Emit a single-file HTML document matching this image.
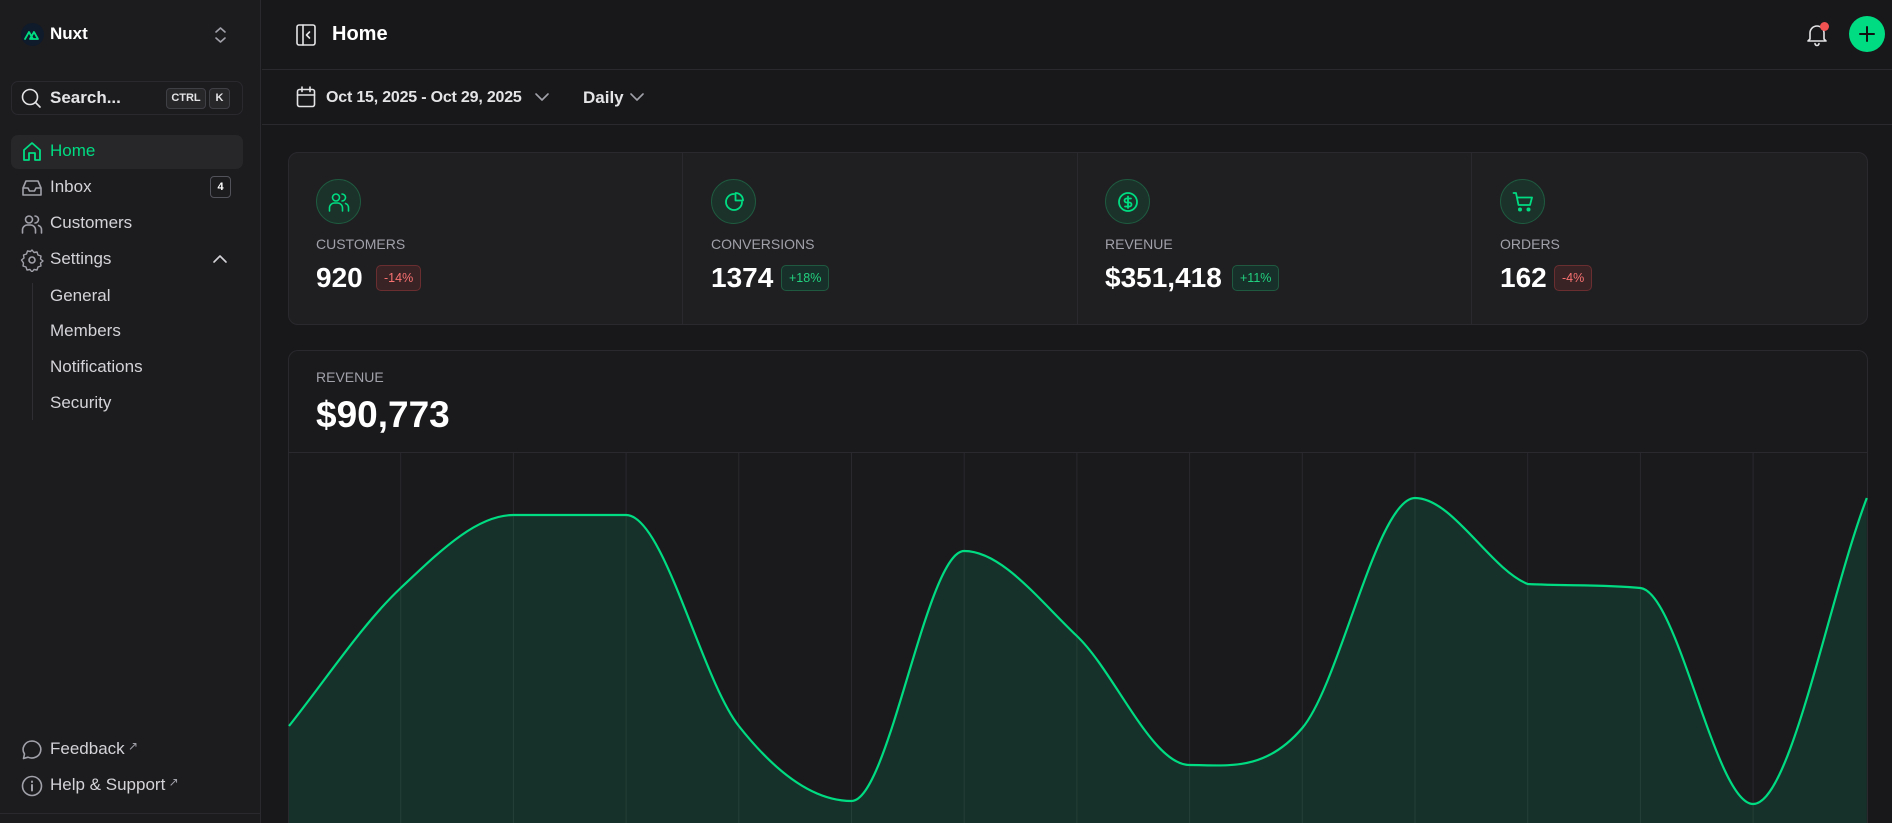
<!DOCTYPE html>
<html style="overflow:hidden;height:823px"><head><meta charset="utf-8"><style>
*{box-sizing:border-box;margin:0;padding:0}
body{width:1892px;height:823px;overflow:hidden;background:#18181b;font-family:"Liberation Sans",sans-serif;color:#fff;position:relative}
.abs{position:absolute}
.sb{left:0;top:0;width:261px;height:823px;background:#1c1c1f;border-right:1px solid #2a2a2e}
.nav{position:absolute;left:50px;font-size:17px;color:#d4d4d8;font-weight:500}
.ico{position:absolute;fill:none;stroke-width:1.6;stroke-linecap:round;stroke-linejoin:round}
.hl{border-bottom:1px solid #2a2a2e}
.card{background:#1f1f22;border:1px solid #2a2a2e;border-radius:10px}
.lbl{position:absolute;font-size:14px;color:#a1a1aa}
.val{position:absolute;font-size:28px;font-weight:700;color:#fff}
.bdg{position:absolute;font-size:12.5px;height:26px;line-height:24px;padding:0 7px;border-radius:5px}
.red{color:#f87171;background:#3a2325;border:1px solid #6b2e30}
.grn{color:#22d17f;background:#17302a;border:1px solid #1f5a40}
.circ{position:absolute;width:45px;height:45px;border-radius:50%;background:#1a3229;border:1px solid #1f5a40}
.kbd{position:absolute;top:88px;height:21px;border:1px solid #3f3f46;border-radius:4px;background:#27272a;font-size:11px;font-weight:700;line-height:19px;text-align:center;color:#e4e4e7}
</style></head><body>
<div class="abs sb"></div>
<div class="abs" style="left:21px;top:23px;width:23px;height:23px;border-radius:50%;background:#0f1a2a"></div>
<svg class="ico" style="left:23px;top:26px" width="19" height="17" viewBox="0 0 19 17"><path d="M2 13 L6 6 L10 13 M7 13 L11 6 L15 13 Z" stroke="#00dc82" stroke-width="1.8"/></svg>
<div class="abs" style="left:50px;top:24px;font-size:17px;font-weight:700">Nuxt</div>
<svg class="ico" style="left:212px;top:25px" width="17" height="20" viewBox="0 0 17 20"><path d="M4 7 L8.5 3 L13 7 M4 13 L8.5 17 L13 13" stroke="#a1a1aa"/></svg>
<div class="abs" style="left:11px;top:81px;width:232px;height:34px;border:1px solid #2a2a2e;border-radius:7px"></div>
<svg class="ico" style="left:20px;top:87px" width="22" height="22" viewBox="0 0 22 22"><circle cx="10" cy="10" r="7.5" stroke="#e4e4e7"/><path d="M15.5 15.5 L20 20" stroke="#e4e4e7"/></svg>
<div class="abs" style="left:50px;top:88px;font-size:17px;font-weight:700;color:#e4e4e7">Search...</div>
<div class="kbd" style="left:166px;width:40px">CTRL</div>
<div class="kbd" style="left:209px;width:21px">K</div>
<div class="abs" style="left:11px;top:135px;width:232px;height:34px;background:#27272a;border-radius:7px"></div>
<svg class="ico" style="left:20px;top:140px" width="24" height="24" viewBox="0 0 24 24"><path d="M4 10 L12 3 L20 10 V20 H15 V13 H9 V20 H4 Z" stroke="#00dc82" stroke-width="1.8"/></svg>
<div class="nav" style="top:141px;color:#00dc82">Home</div>
<svg class="ico" style="left:20px;top:176px" width="24" height="24" viewBox="0 0 24 24"><path d="M3 12 L6 5 H18 L21 12 V19 H3 Z M3 12 H8 L9.5 15 H14.5 L16 12 H21" stroke="#a1a1aa"/></svg>
<div class="nav" style="top:177px">Inbox</div>
<div class="abs" style="left:210px;top:176px;width:21px;height:22px;border:1px solid #52525b;border-radius:4px;font-size:11px;font-weight:700;text-align:center;line-height:20px">4</div>
<svg class="ico" style="left:20px;top:212px" width="24" height="24" viewBox="0 0 24 24"><circle cx="9" cy="7.5" r="3.5" stroke="#a1a1aa"/><path d="M2.5 21 V18 a5 5 0 0 1 5 -5 h3 a5 5 0 0 1 5 5 V21 M15 4 a3.5 3.5 0 0 1 0 7 M18.5 13.5 a4.5 4.5 0 0 1 3 4.5 V21" stroke="#a1a1aa"/></svg>
<div class="nav" style="top:213px">Customers</div>
<svg class="ico" style="left:20px;top:248px" width="24" height="24" viewBox="0 0 24 24"><circle cx="12" cy="12" r="3" stroke="#a1a1aa"/><path d="M12 2 l2 2.5 3-.5 1 3 3 1-.5 3 2.5 2-2.5 2 .5 3-3 1-1 3-3-.5-2 2.5-2-2.5-3 .5-1-3-3-1 .5-3L1.5 12 4 10l-.5-3 3-1 1-3 3 .5z" stroke="#a1a1aa" stroke-width="1.4"/></svg>
<div class="nav" style="top:249px">Settings</div>
<svg class="ico" style="left:210px;top:251px" width="20" height="16" viewBox="0 0 20 16"><path d="M4 11 L10 5 L16 11" stroke="#d4d4d8"/></svg>
<div class="abs" style="left:32px;top:283px;width:1px;height:137px;background:#2e2e33"></div>
<div class="nav" style="top:286px">General</div>
<div class="nav" style="top:321px">Members</div>
<div class="nav" style="top:357px">Notifications</div>
<div class="nav" style="top:393px">Security</div>
<svg class="ico" style="left:20px;top:738px" width="24" height="24" viewBox="0 0 24 24"><path d="M12 3 a9 8.5 0 1 1 -4 16.2 L3.5 20.5 L4.5 16 A9 8.5 0 0 1 12 3 Z" stroke="#a1a1aa"/></svg>
<div class="nav" style="top:739px">Feedback<span style="font-size:12px;vertical-align:top;color:#a1a1aa"> ↗</span></div>
<svg class="ico" style="left:20px;top:774px" width="24" height="24" viewBox="0 0 24 24"><circle cx="12" cy="12" r="9.5" stroke="#a1a1aa"/><path d="M12 11 V16.5 M12 7.5 V8" stroke="#a1a1aa" stroke-width="2"/></svg>
<div class="nav" style="top:775px">Help &amp; Support<span style="font-size:12px;vertical-align:top;color:#a1a1aa"> ↗</span></div>
<div class="abs" style="left:0;top:813px;width:261px;height:1px;background:#2a2a2e"></div>

<div class="abs hl" style="left:262px;top:0;width:1630px;height:70px"></div>
<svg class="ico" style="left:295px;top:23px" width="22" height="24" viewBox="0 0 22 24"><rect x="2" y="2" width="18" height="20" rx="2" stroke="#e4e4e7"/><path d="M8 2 V22 M14.5 9 L11.5 12 L14.5 15" stroke="#e4e4e7"/></svg>
<div class="abs" style="left:332px;top:23px;font-size:20px;font-weight:700">Home</div>
<svg class="ico" style="left:1804px;top:21px" width="26" height="26" viewBox="0 0 26 26"><path d="M6 18 V12 a7 7 0 0 1 14 0 V18 L22 20 H4 Z M11 22.5 a2 2 0 0 0 4 0" stroke="#e4e4e7"/></svg>
<div class="abs" style="left:1820px;top:22px;width:9px;height:9px;border-radius:50%;background:#f05252"></div>
<div class="abs" style="left:1849px;top:16px;width:36px;height:36px;border-radius:50%;background:#00dc82"></div>
<svg class="ico" style="left:1857px;top:24px" width="20" height="20" viewBox="0 0 20 20"><path d="M10 3 V17 M3 10 H17" stroke="#111" stroke-width="2"/></svg>
<div class="abs hl" style="left:262px;top:70px;width:1630px;height:55px"></div>
<svg class="ico" style="left:296px;top:86px" width="20" height="22" viewBox="0 0 20 22"><rect x="1.5" y="3.5" width="17" height="17" rx="2" stroke="#e4e4e7"/><path d="M1.5 9 H18.5 M6 1 V5.5 M14 1 V5.5" stroke="#e4e4e7"/></svg>
<div class="abs" style="left:326px;top:89px;font-size:16px;font-weight:700;color:#e4e4e7;letter-spacing:-0.2px;white-space:nowrap">Oct 15, 2025 - Oct 29, 2025</div>
<svg class="ico" style="left:533px;top:90px" width="18" height="14" viewBox="0 0 18 14"><path d="M3 4 L9 10 L15 4" stroke="#a1a1aa"/></svg>
<div class="abs" style="left:583px;top:88px;font-size:17px;font-weight:700;color:#e4e4e7">Daily</div>
<svg class="ico" style="left:628px;top:90px" width="18" height="14" viewBox="0 0 18 14"><path d="M3 4 L9 10 L15 4" stroke="#a1a1aa"/></svg>

<div class="abs card" style="left:288px;top:152px;width:1580px;height:173px"></div>
<div class="abs" style="left:682px;top:153px;width:1px;height:171px;background:#2a2a2e"></div>
<div class="abs" style="left:1077px;top:153px;width:1px;height:171px;background:#2a2a2e"></div>
<div class="abs" style="left:1471px;top:153px;width:1px;height:171px;background:#2a2a2e"></div>

<div class="circ" style="left:316px;top:179px"></div>
<svg class="ico" style="left:327px;top:190px" width="24" height="24" viewBox="0 0 24 24"><circle cx="9" cy="7.5" r="3.5" stroke="#00dc82"/><path d="M2.5 21 V18 a5 5 0 0 1 5 -5 h3 a5 5 0 0 1 5 5 V21 M15 4 a3.5 3.5 0 0 1 0 7 M18.5 13.5 a4.5 4.5 0 0 1 3 4.5 V21" stroke="#00dc82"/></svg>
<div class="lbl" style="left:316px;top:236px">CUSTOMERS</div>
<div class="val" style="left:316px;top:262px">920</div>
<div class="bdg red" style="left:376px;top:265px">-14%</div>

<div class="circ" style="left:711px;top:179px"></div>
<svg class="ico" style="left:722px;top:190px" width="24" height="24" viewBox="0 0 24 24"><path d="M12 4 A8 8 0 1 0 20 12" stroke="#00dc82" stroke-width="1.8"/><path d="M13.5 3 A7.5 7.5 0 0 1 21 10.5 H13.5 Z" stroke="#00dc82" stroke-width="1.8"/></svg>
<div class="lbl" style="left:711px;top:236px">CONVERSIONS</div>
<div class="val" style="left:711px;top:262px">1374</div>
<div class="bdg grn" style="left:781px;top:265px">+18%</div>

<div class="circ" style="left:1105px;top:179px"></div>
<svg class="ico" style="left:1116px;top:190px" width="24" height="24" viewBox="0 0 24 24"><circle cx="12" cy="12" r="9" stroke="#00dc82" stroke-width="1.8"/><path d="M15 8.5 H10.5 a2 2 0 0 0 0 4 h3 a2 2 0 0 1 0 4 H9 M12 6.5 V18" stroke="#00dc82" stroke-width="1.8"/></svg>
<div class="lbl" style="left:1105px;top:236px">REVENUE</div>
<div class="val" style="left:1105px;top:262px">$351,418</div>
<div class="bdg grn" style="left:1232px;top:265px">+11%</div>

<div class="circ" style="left:1500px;top:179px"></div>
<svg class="ico" style="left:1511px;top:190px" width="24" height="24" viewBox="0 0 24 24"><path d="M2.5 3 H5 L7.5 15 H19 L21 7.5 H6" stroke="#00dc82" stroke-width="1.8"/><circle cx="9" cy="19.5" r="1.2" fill="#00dc82" stroke="#00dc82"/><circle cx="17.5" cy="19.5" r="1.2" fill="#00dc82" stroke="#00dc82"/></svg>
<div class="lbl" style="left:1500px;top:236px">ORDERS</div>
<div class="val" style="left:1500px;top:262px">162</div>
<div class="bdg red" style="left:1554px;top:265px">-4%</div>

<div class="abs" style="left:288px;top:350px;width:1580px;height:473px;background:#1a1a1d;border:1px solid #2a2a2e;border-bottom:none;border-radius:10px 10px 0 0"></div>
<div class="lbl" style="left:316px;top:369px">REVENUE</div>
<div class="abs" style="left:316px;top:394px;font-size:37px;font-weight:700">$90,773</div>
<div class="abs" style="left:289px;top:452px;width:1578px;height:1px;background:#2a2a2e"></div>
<svg class="abs" style="left:0;top:0" width="1892" height="823" viewBox="0 0 1892 823">
<g stroke="#2a2a2e" stroke-width="1">
<path d="M400.7 453V823 M513.4 453V823 M626.1 453V823 M738.8 453V823 M851.5 453V823 M964.2 453V823 M1076.9 453V823 M1189.6 453V823 M1302.3 453V823 M1415 453V823 M1527.7 453V823 M1640.4 453V823 M1753.1 453V823"/>
</g>
<path d="M289,726 C325.6,680 363.1,623.2 400.7,588 C438.3,552.8 475.8,515 513.4,515 C551,515 588.5,515 626.1,515 C663.7,515 701.2,678.3 738.8,726 C776.4,773.7 813.9,801 851.5,801 C889.1,801 926.6,551 964.2,551 C1001.8,551 1039.3,600.3 1076.9,636 C1114.5,671.7 1152,765 1189.6,765 C1227.2,765 1264.7,772.3 1302.3,728 C1339.9,683.7 1377.4,498 1415,498 C1452.6,498 1490.1,569 1527.7,584 C1565.3,586 1602.8,584.3 1640.4,588 C1678,591.7 1715.5,804 1753.1,804 C1790.7,804 1828.2,600 1866.8,498 L1866.8,823 L289,823 Z" fill="#00dc82" fill-opacity="0.12"/>
<path d="M289,726 C325.6,680 363.1,623.2 400.7,588 C438.3,552.8 475.8,515 513.4,515 C551,515 588.5,515 626.1,515 C663.7,515 701.2,678.3 738.8,726 C776.4,773.7 813.9,801 851.5,801 C889.1,801 926.6,551 964.2,551 C1001.8,551 1039.3,600.3 1076.9,636 C1114.5,671.7 1152,765 1189.6,765 C1227.2,765 1264.7,772.3 1302.3,728 C1339.9,683.7 1377.4,498 1415,498 C1452.6,498 1490.1,569 1527.7,584 C1565.3,586 1602.8,584.3 1640.4,588 C1678,591.7 1715.5,804 1753.1,804 C1790.7,804 1828.2,600 1866.8,498" fill="none" stroke="#00dc82" stroke-width="2.2"/>
</svg>
</body></html>
